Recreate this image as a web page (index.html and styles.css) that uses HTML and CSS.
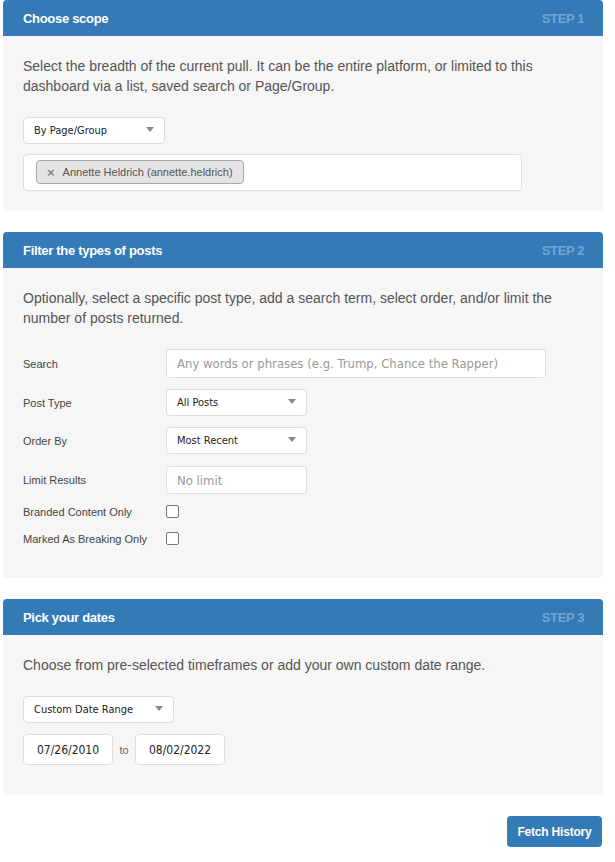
FILE: index.html
```html
<!DOCTYPE html>
<html lang="en">
<head>
<meta charset="utf-8">
<title>Fetch History</title>
<link rel="stylesheet" href="styles.css">
</head>
<body>
<div class="page">
  <section class="panel">
    <header class="panel-head">
      <h2 class="panel-title">Choose scope</h2>
      <span class="panel-step">STEP 1</span>
    </header>
    <div class="panel-body body-scope">
      <p class="desc">Select the breadth of the current pull. It can be the entire platform, or limited to this dashboard via a list, saved search or Page/Group.</p>
      <div class="select w-scope"><span>By Page/Group</span><i class="caret"></i></div>
      <div class="tagbox">
        <span class="tag"><span class="tag-x">×</span>Annette Heldrich (annette.heldrich)</span>
      </div>
    </div>
  </section>

  <section class="panel">
    <header class="panel-head">
      <h2 class="panel-title">Filter the types of posts</h2>
      <span class="panel-step">STEP 2</span>
    </header>
    <div class="panel-body body-filter">
      <p class="desc">Optionally, select a specific post type, add a search term, select order, and/or limit the number of posts returned.</p>
      <div class="form-row row-search">
        <label class="label">Search</label>
        <div class="input w-search placeholder">Any words or phrases (e.g. Trump, Chance the Rapper)</div>
      </div>
      <div class="form-row row-select">
        <label class="label">Post Type</label>
        <div class="select w-short"><span>All Posts</span><i class="caret"></i></div>
      </div>
      <div class="form-row row-select row-order">
        <label class="label">Order By</label>
        <div class="select w-short"><span>Most Recent</span><i class="caret"></i></div>
      </div>
      <div class="form-row row-limit">
        <label class="label">Limit Results</label>
        <div class="input w-short placeholder">No limit</div>
      </div>
      <div class="form-row row-check">
        <label class="label">Branded Content Only</label>
        <span class="checkbox"></span>
      </div>
      <div class="form-row row-check row-last">
        <label class="label">Marked As Breaking Only</label>
        <span class="checkbox"></span>
      </div>
    </div>
  </section>

  <section class="panel">
    <header class="panel-head">
      <h2 class="panel-title">Pick your dates</h2>
      <span class="panel-step">STEP 3</span>
    </header>
    <div class="panel-body body-dates">
      <p class="desc">Choose from pre-selected timeframes or add your own custom date range.</p>
      <div class="select w-range"><span>Custom Date Range</span><i class="caret"></i></div>
      <div class="dates">
        <div class="date">07/26/2010</div>
        <span class="to">to</span>
        <div class="date">08/02/2022</div>
      </div>
    </div>
  </section>

  <div class="actions">
    <button class="btn" type="button">Fetch History</button>
  </div>
</div>
</body>
</html>
```

FILE: styles.css
```css
* { box-sizing: border-box; }
html, body { margin: 0; padding: 0; background: #fff; }
body { font-family: "Liberation Sans", Arial, sans-serif; color: #333; }

.page { width: 600px; margin-left: 3px; }

.panel {
  background: #f6f6f6;
  border-radius: 4px;
  overflow: hidden;
  margin-bottom: 21px;
}
.panel-head {
  height: 36px;
  background: #337ab7;
  display: flex;
  align-items: center;
  justify-content: space-between;
  padding: 0 19px 0 20px;
}
.panel-title {
  margin: 0;
  font-size: 13px;
  font-weight: bold;
  color: #fff;
  letter-spacing: -0.3px;
}
.panel-step {
  font-size: 13px;
  font-weight: bold;
  color: #72a5d8;
  letter-spacing: -0.4px;
}

.panel-body { padding: 20px 20px 20px 20px; }
.body-filter { padding-bottom: 33px; }
.body-dates { padding-bottom: 30px; }

.desc {
  margin: 0 0 21px;
  font-size: 14px;
  line-height: 20px;
  color: #555;
}

.select, .input, .date {
  background: #fff;
  border: 1px solid #ddd;
  border-radius: 4px;
}
.select {
  height: 27px;
  display: flex;
  align-items: center;
  justify-content: space-between;
  padding: 0 10px 0 10px;
  font-family: "DejaVu Sans Condensed", "DejaVu Sans", sans-serif;
  font-size: 11px;
  color: #222;
}
.caret {
  width: 0; height: 0;
  border-left: 4.5px solid transparent;
  border-right: 4.5px solid transparent;
  border-top: 5px solid #888;
  margin-top: -2px;
}
.w-scope { width: 142px; }
.w-short { width: 141px; }
.w-range { width: 151px; }

.tagbox {
  margin-top: 10px;
  width: 499px;
  height: 37px;
  background: #fff;
  border: 1px solid #ddd;
  border-radius: 4px;
  padding: 5px 12px;
}
.tag {
  display: inline-flex;
  align-items: center;
  height: 24px;
  padding: 0 10px 0 10px;
  background: #e4e4e4;
  border: 1px solid #aaa;
  border-radius: 4px;
  font-size: 11px;
  color: #555;
}
.tag-x {
  font-size: 13px;
  font-weight: bold;
  color: #888;
  margin-right: 8px;
  line-height: 1;
  margin-top: 1px;
}

.form-row {
  display: flex;
  align-items: center;
}
.label {
  width: 143px;
  flex: none;
  font-size: 11px;
  color: #444;
}
.row-search { margin-bottom: 11px; }
.row-select { margin-bottom: 11px; }
.row-order { margin-bottom: 12px; }
.row-limit { margin-bottom: 11px; }
.row-check { height: 13px; margin-bottom: 14px; }
.row-last { margin-bottom: 0; }

.input {
  display: flex;
  align-items: center;
  padding: 0 10px;
  font-family: "DejaVu Sans Condensed", "DejaVu Sans", sans-serif;
  font-size: 13px;
}
.w-search { width: 380px; height: 29px; }
.row-limit .input { height: 28px; }
.placeholder { color: #999; }

.checkbox {
  width: 13px;
  height: 13px;
  border: 1px solid #767676;
  border-radius: 2px;
  background: #fff;
}

.dates {
  margin-top: 11px;
  display: flex;
  align-items: center;
}
.date {
  width: 90px;
  height: 31px;
  display: flex;
  align-items: center;
  justify-content: center;
  font-family: "DejaVu Sans Condensed", "DejaVu Sans", sans-serif;
  font-size: 12px;
  color: #222;
}
.to {
  width: 22px;
  text-align: center;
  font-size: 11px;
  color: #666;
}

.actions {
  display: flex;
  justify-content: flex-end;
  padding-right: 1px;
}
.btn {
  width: 95px;
  height: 31px;
  border: 0;
  border-radius: 4px;
  background: #337ab7;
  color: #fff;
  font-family: "Liberation Sans", Arial, sans-serif;
  font-size: 12px;
  font-weight: bold;
  letter-spacing: -0.2px;
  padding: 0;
}
```
